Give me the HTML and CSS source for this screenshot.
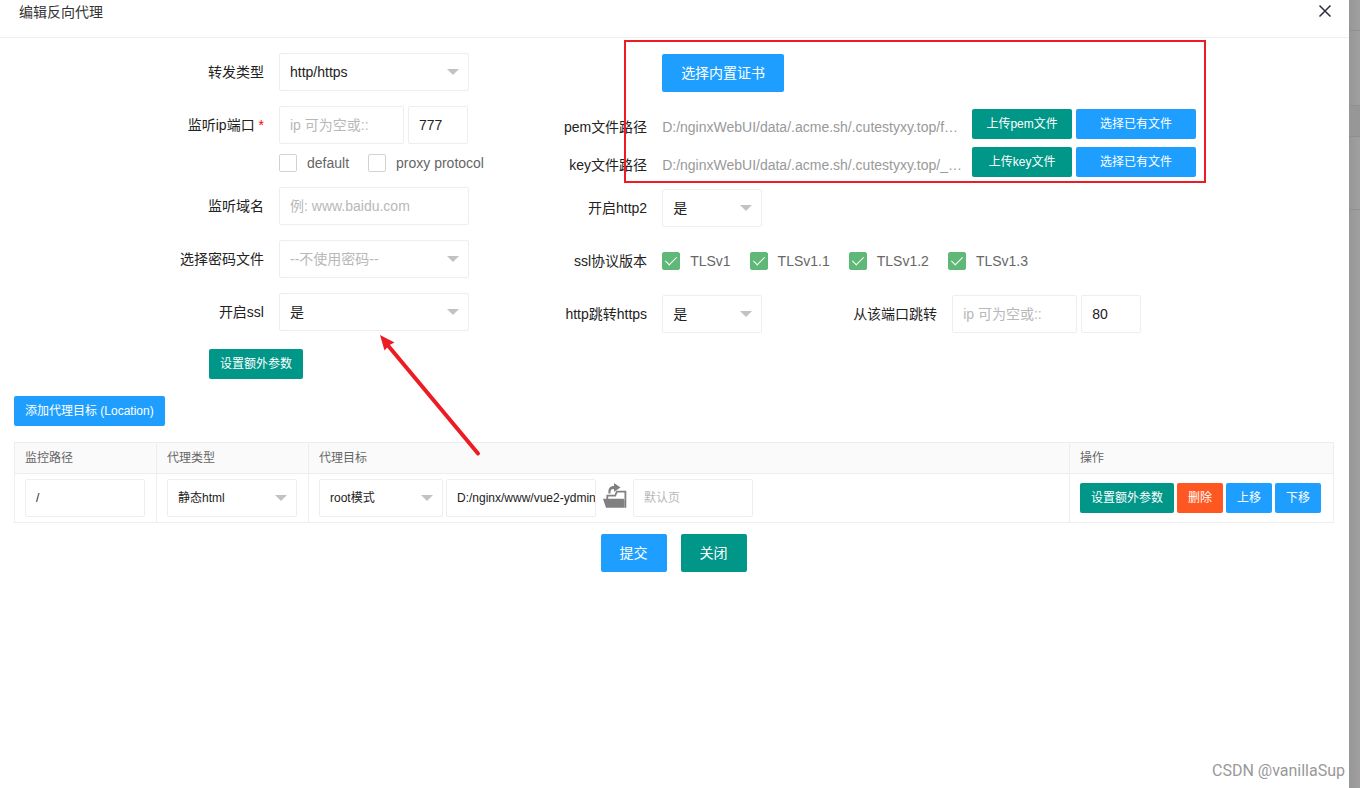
FILE: index.html
```html
<!DOCTYPE html>
<html lang="zh-CN">
<head>
<meta charset="utf-8">
<title>编辑反向代理</title>
<link rel="stylesheet" href="styles.css">
</head>
<body>
<main class="dialog">
  <header class="dialog-head">
    <h1 class="dialog-title">编辑反向代理</h1>
    <button class="close" type="button" aria-label="关闭窗口">
      <svg width="14" height="14" viewBox="0 0 14 14"><path d="M1.5 1.5 12.5 12.5M12.5 1.5 1.5 12.5" fill="none" stroke="#2e2d3c" stroke-width="1.5"/></svg>
    </button>
  </header>

  <form class="form">
    <div class="col-left">
      <div class="row">
        <label class="label" for="type">转发类型</label>
        <span class="select wide"><select id="type"><option>http/https</option></select></span>
      </div>
      <div class="row">
        <label class="label" for="ip">监听ip端口 <span class="req">*</span></label>
        <div class="pair">
          <input class="input ip" id="ip" type="text" placeholder="ip 可为空或::">
          <input class="input port" type="text" value="777" aria-label="端口">
        </div>
      </div>
      <div class="row checks under">
        <label class="check"><input type="checkbox">default</label>
        <label class="check"><input type="checkbox">proxy protocol</label>
      </div>
      <div class="row">
        <label class="label" for="domain">监听域名</label>
        <input class="input wide" id="domain" type="text" placeholder="例: www.baidu.com">
      </div>
      <div class="row">
        <label class="label" for="pass">选择密码文件</label>
        <span class="select wide"><select class="empty" id="pass"><option>--不使用密码--</option></select></span>
      </div>
      <div class="row">
        <label class="label" for="ssl">开启ssl</label>
        <span class="select wide"><select id="ssl"><option>是</option></select></span>
      </div>
      <div class="extra">
        <button class="btn small green" type="button">设置额外参数</button>
      </div>
    </div>

    <div class="col-right">
      <div class="row cert">
        <button class="btn blue" type="button">选择内置证书</button>
      </div>
      <div class="row file">
        <span class="label">pem文件路径</span>
        <span class="path">D:/nginxWebUI/data/.acme.sh/.cutestyxy.top/f…</span>
        <div class="pair">
          <button class="btn small green upload" type="button">上传pem文件</button>
          <button class="btn small blue pick" type="button">选择已有文件</button>
        </div>
      </div>
      <div class="row file last">
        <span class="label">key文件路径</span>
        <span class="path">D:/nginxWebUI/data/.acme.sh/.cutestyxy.top/_…</span>
        <div class="pair">
          <button class="btn small green upload" type="button">上传key文件</button>
          <button class="btn small blue pick" type="button">选择已有文件</button>
        </div>
      </div>
      <div class="row">
        <label class="label" for="http2">开启http2</label>
        <span class="select short"><select id="http2"><option>是</option></select></span>
      </div>
      <div class="row">
        <span class="label">ssl协议版本</span>
        <div class="checks">
          <label class="check"><input type="checkbox" checked>TLSv1</label>
          <label class="check"><input type="checkbox" checked>TLSv1.1</label>
          <label class="check"><input type="checkbox" checked>TLSv1.2</label>
          <label class="check"><input type="checkbox" checked>TLSv1.3</label>
        </div>
      </div>
      <div class="row">
        <label class="label" for="jump">http跳转https</label>
        <span class="select short"><select id="jump"><option>是</option></select></span>
        <label class="label jump-label" for="jump-ip">从该端口跳转</label>
        <div class="pair">
          <input class="input ip" id="jump-ip" type="text" placeholder="ip 可为空或::">
          <input class="input port" type="text" value="80" aria-label="跳转端口">
        </div>
      </div>
    </div>
  </form>

  <section class="targets">
    <button class="btn small blue" type="button">添加代理目标 (Location)</button>
    <table class="table">
      <colgroup><col class="c-path"><col class="c-type"><col><col class="c-act"></colgroup>
      <thead>
        <tr><th>监控路径</th><th>代理类型</th><th>代理目标</th><th>操作</th></tr>
      </thead>
      <tbody>
        <tr>
          <td><input class="input loc" type="text" value="/" aria-label="监控路径"></td>
          <td><span class="select kind"><select aria-label="代理类型"><option>静态html</option></select></span></td>
          <td>
            <div class="cell">
              <span class="select mode"><select aria-label="模式"><option>root模式</option></select></span>
              <input class="input root" type="text" value="D:/nginx/www/vue2-ydmin/dist" aria-label="根目录">
              <button class="folder" type="button" aria-label="选择目录">
                <svg width="24" height="25" viewBox="0 0 24 25" fill="#808080">
                  <path d="M0 15.700H20.500L21.500 17V24.700H3Z"/>
                  <path d="M4.300 16V12.600H12.200L13.800 8.700H22.400V24.700" fill="none" stroke="#808080" stroke-width="1.800"/>
                  <path d="M5.500 10.500C5 5 7 3 11 3V0L17.500 4.500 11 8.700V6C8 6 7.500 7 7.500 10.500Z"/>
                </svg>
              </button>
              <input class="input loc" type="text" placeholder="默认页" aria-label="默认页">
            </div>
          </td>
          <td>
            <div class="cell">
              <button class="btn small green" type="button">设置额外参数</button>
              <button class="btn small orange" type="button">删除</button>
              <button class="btn small blue" type="button">上移</button>
              <button class="btn small blue" type="button">下移</button>
            </div>
          </td>
        </tr>
      </tbody>
    </table>
  </section>

  <footer class="actions">
    <button class="btn blue" type="button">提交</button>
    <button class="btn green" type="button">关闭</button>
  </footer>

  <div class="mark-box"></div>
  <svg class="mark-arrow" width="102" height="122" viewBox="0 0 102 122">
    <path d="M98 118.500 8 10.500" fill="none" stroke="#ed1c24" stroke-width="4" stroke-linecap="round"/>
    <path d="M0 0 14.500 7.500 9.500 10 4.500 15.500Z" fill="#ed1c24"/>
  </svg>
</main>
<aside class="behind">
  <div class="band top"></div>
  <div class="band tall"></div>
  <div class="band head"></div>
  <div class="band item"></div>
</aside>
<div class="watermark">CSDN @vanillaSup</div>
</body>
</html>
```

FILE: styles.css
```css
* { box-sizing: border-box; }

body {
  margin: 0;
  min-height: 100vh;
  display: flex;
  position: relative;
  font: 14px/20px "Liberation Sans", "Noto Sans CJK SC", sans-serif;
  color: #222;
  background: #9e9e9e;
}

button, input, select { font: inherit; color: inherit; margin: 0; }

.dialog { flex: 1; min-width: 0; position: relative; background: #fff; }

.dialog-head {
  display: flex;
  justify-content: space-between;
  align-items: flex-start;
  height: 38px;
  padding: 2px 17px 0 19px;
  border-bottom: 1px solid #eee;
}
.dialog-title { margin: 0; font-size: 14px; font-weight: 400; color: #333; }
.close { display: flex; padding: 2px 0 0; border: 0; background: none; }

/* form */
.form { display: grid; grid-template-columns: 37% 1fr; padding-top: 15px; }
.row { display: flex; align-items: center; min-height: 38px; margin-bottom: 15px; }
.label { flex: none; padding-right: 15px; text-align: right; white-space: nowrap; }
.col-left .label { width: 279px; }
.col-right .label { width: 163px; }
.col-right .jump-label { width: 190px; }
.req { color: #f00; }
.pair { display: flex; gap: 4px; }

.input, .select select {
  width: 100%;
  height: 38px;
  padding: 0 0 0 10px;
  border: 1px solid #eee;
  border-radius: 2px;
  background: #fff;
  outline: 0;
}
.input::placeholder { color: #b8b8b8; opacity: 1; }
.select { position: relative; display: block; }
.select select { appearance: none; display: block; }
.select .empty { color: #b8b8b8; }
.select::after {
  content: "";
  position: absolute;
  top: 16px;
  right: 10px;
  border: 6px solid transparent;
  border-top-color: #c2c2c2;
  border-bottom: 0;
  pointer-events: none;
}
.wide, .input.wide { width: 190px; }
.short { width: 100px; }
.input.ip { width: 125px; }
.input.port { width: 60px; }

.checks { display: flex; gap: 19px; }
.row.under { min-height: 18px; margin-top: -5px; padding-left: 279px; }
.check { display: flex; align-items: center; gap: 10px; height: 18px; color: #666; white-space: nowrap; }
.check input {
  appearance: none;
  display: flex;
  justify-content: center;
  width: 18px;
  height: 18px;
  border: 1px solid #d2d2d2;
  border-radius: 2px;
  background: #fff;
}
.check input:checked { border-color: #5fb878; background: #5fb878; }
.check input:checked::after {
  content: "";
  width: 5px;
  height: 10px;
  margin-top: 1px;
  border: solid #fff;
  border-width: 0 1px 1px 0;
  transform: rotate(45deg);
}

.extra { padding: 3px 0 0 209px; }
.col-right .cert { margin: 1px 0 16px; padding-left: 163px; }
.col-right .file { margin-bottom: 0; }
.col-right .last { margin-bottom: 5px; }
.file .pair { align-self: flex-start; padding-top: 1px; }
.path { width: 310px; color: #999; white-space: nowrap; }

.btn {
  height: 38px;
  padding: 0 18px;
  border: 1px solid transparent;
  border-radius: 2px;
  color: #fff;
  white-space: nowrap;
}
.small { height: 30px; padding: 0 10px; font-size: 12px; }
.upload { width: 100px; }
.pick { width: 120px; }
.blue { background: #1e9fff; }
.green { background: #009688; }
.orange { background: #ff5722; }

/* proxy targets */
.targets { padding: 17px 15px 0 14px; }
.targets > .btn { display: block; }
.table {
  width: 100%;
  margin-top: 16px;
  border-collapse: collapse;
  table-layout: fixed;
  font-size: 12px;
}
.c-path { width: 142px; }
.c-type { width: 152px; }
.c-act { width: 264px; }
.table th, .table td { padding: 5px 10px; border: 1px solid #eee; text-align: left; }
.table th { font-weight: 400; color: #666; background: #fafafa; }
.table .input { display: block; }
.cell { display: flex; align-items: center; gap: 3px; }
.input.loc { width: 120px; }
.kind { width: 130px; }
.mode { width: 124px; }
.input.root { width: 150px; }
.folder { display: flex; padding: 0 3px 6px 4px; border: 0; background: none; }

.actions { display: flex; justify-content: center; gap: 14px; padding: 11px 2px 0 0; }

/* annotations */
.mark-box {
  position: absolute;
  top: 40px;
  left: 624px;
  width: 582px;
  height: 143px;
  border: 2px solid #ed1c24;
  pointer-events: none;
}
.mark-arrow { position: absolute; top: 335px; left: 380px; pointer-events: none; }

/* dimmed page behind the dialog */
.behind { width: 11px; background: linear-gradient(90deg, #979797, #a0a0a0); }
.band { border-bottom: 1px solid #909090; }
.top { height: 31px; }
.tall { height: 75px; }
.head { height: 31px; background: #979797; }
.item { height: 73px; }

.watermark {
  position: absolute;
  right: 15px;
  bottom: 7px;
  font: 16px/20px Roboto, sans-serif;
  color: #999;
}
```
